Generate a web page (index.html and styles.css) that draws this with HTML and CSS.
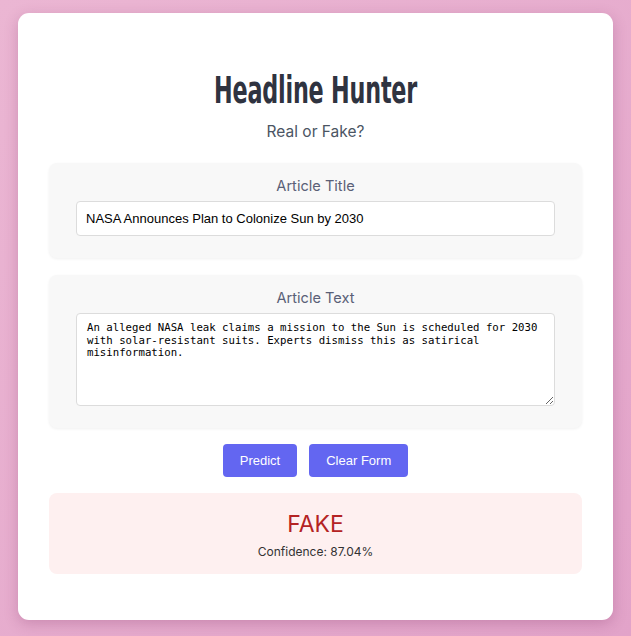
FILE: index.html
```html
<!DOCTYPE html>
<html>
<head>
<meta charset="utf-8">
<link rel="stylesheet" href="styles.css">
</head>
<body>
<main class="card">
  <h1 class="title"><span class="title-text">Headline Hunter</span></h1>
  <p class="subtitle">Real or Fake?</p>
  <section class="panel">
    <label class="label" for="t">Article Title</label>
    <input id="t" class="input" type="text" value="NASA Announces Plan to Colonize Sun by 2030">
  </section>
  <section class="panel">
    <label class="label" for="x">Article Text</label>
    <textarea id="x" class="textarea">An alleged NASA leak claims a mission to the Sun is scheduled for 2030 with solar-resistant suits. Experts dismiss this as satirical misinformation.</textarea>
  </section>
  <div class="actions">
    <button class="btn">Predict</button>
    <button class="btn">Clear Form</button>
  </div>
  <section class="result">
    <div class="verdict">FAKE</div>
    <div class="confidence">Confidence: 87.04%</div>
  </section>
</main>
</body>
</html>
```
FILE: styles.css
```css
html, body { margin: 0; padding: 0; }
body {
  width: 631px;
  height: 636px;
  overflow: hidden;
  background: linear-gradient(135deg, #ebb6d3 0%, #e2a3c9 100%);
  font-family: Inter, "Noto Sans", sans-serif;
  padding-top: 13px;
  box-sizing: border-box;
}
.card {
  width: 595px;
  height: 607px;
  margin: 0 auto;
  background: #fff;
  border-radius: 11px;
  box-shadow: 0 4px 14px rgba(120, 40, 90, 0.25);
  padding: 58px 31px 0;
  box-sizing: border-box;
  display: flex;
  flex-direction: column;
}
.title {
  margin: 0;
  text-align: center;
  font-family: "DejaVu Sans Condensed", "DejaVu Sans", sans-serif;
  font-stretch: condensed;
  font-weight: 700;
  font-size: 37px;
  line-height: 40px;
  color: #2f3340;
}
.title-text {
  display: inline-block;
  transform: scaleX(0.67);
  letter-spacing: -0.3px;
}
.subtitle {
  margin: 11px 0 0;
  text-align: center;
  font-size: 15.5px;
  line-height: 20px;
  color: #4b5563;
}
.panel {
  margin-top: 21px;
  background: #f8f8f8;
  border-radius: 8px;
  box-shadow: 0 1px 3px rgba(0,0,0,0.06);
  padding: 14px 27px 22px;
  display: flex;
  flex-direction: column;
  align-items: stretch;
}
.panel + .panel { margin-top: 17px; }
.label {
  text-align: center;
  font-size: 14.6px;
  line-height: 18px;
  color: #5a6077;
  margin-bottom: 6px;
}
.input {
  height: 35px;
  box-sizing: border-box;
  border: 1px solid #dcdcdc;
  border-radius: 4px;
  padding: 0 9px;
  font-family: "Liberation Sans", Arial, sans-serif;
  font-size: 13px;
  color: #000;
  background: #fff;
}
.textarea {
  height: 93px;
  box-sizing: border-box;
  border: 1px solid #dcdcdc;
  border-radius: 4px;
  padding: 8px 10px;
  font-family: "DejaVu Sans Mono", monospace;
  font-size: 10.7px;
  line-height: 12.6px;
  color: #000;
  background: #fff;
  resize: vertical;
}
.actions {
  display: flex;
  justify-content: center;
  gap: 12px;
  margin-top: 16px;
}
.btn {
  height: 33px;
  padding: 0 17px;
  border: none;
  border-radius: 4px;
  background: #6366f1;
  color: #fff;
  font-family: "Liberation Sans", Arial, sans-serif;
  font-size: 13px;
}
.result {
  margin-top: 16px;
  background: #fef0f0;
  border-radius: 8px;
  height: 81px;
  box-sizing: border-box;
  padding-top: 17px;
  text-align: center;
}
.verdict {
  font-size: 23px;
  line-height: 28px;
  color: #b42323;
}
.confidence {
  margin-top: 6px;
  font-size: 12px;
  line-height: 16px;
  color: #333;
}
```
